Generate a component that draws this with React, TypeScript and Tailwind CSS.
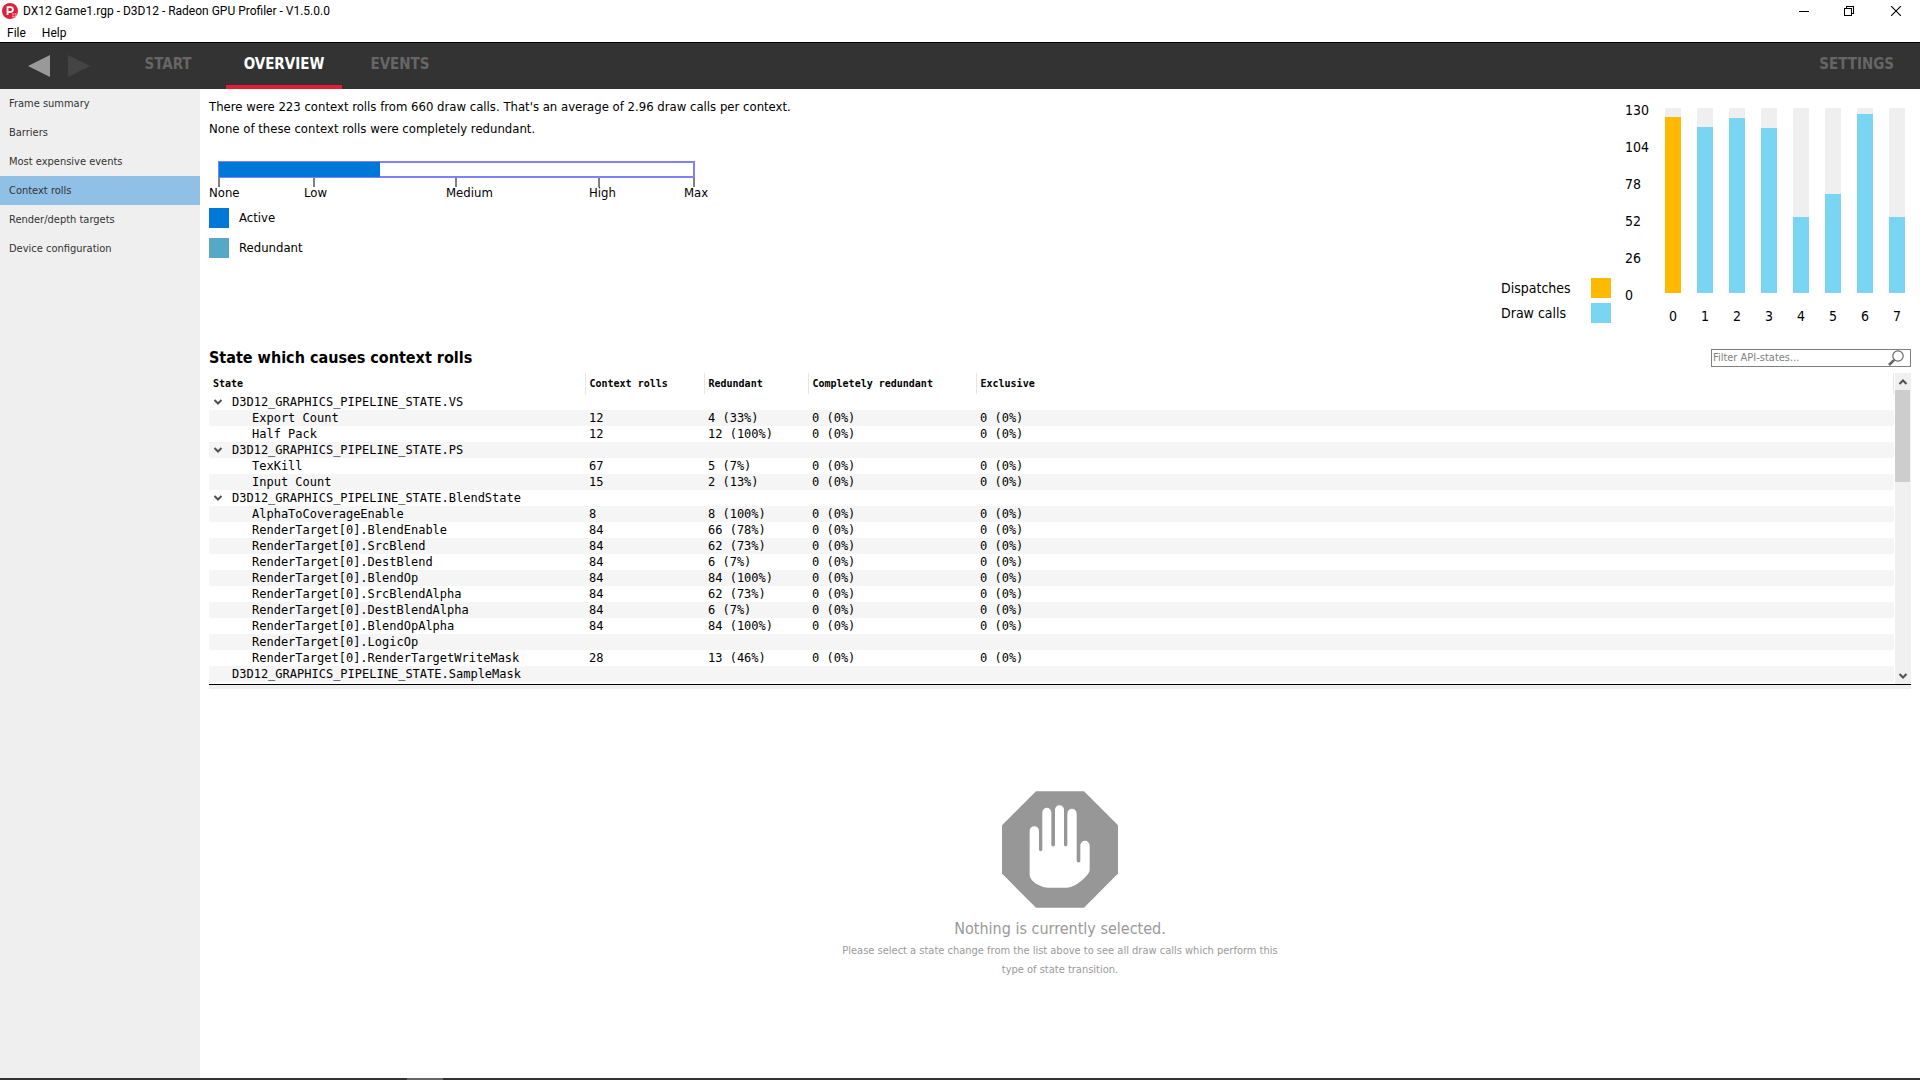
type Row = { name: string; level: 0 | 1; open?: boolean; cells?: [string, string, string, string] };

const zero = "0 (0%)";
const leaf = (name: string, rolls: string, redundant: string): Row => ({
  name,
  level: 1,
  cells: [rolls, redundant, zero, zero],
});

const rows: Row[] = [
  { name: "D3D12_GRAPHICS_PIPELINE_STATE.VS", level: 0, open: true },
  leaf("Export Count", "12", "4 (33%)"),
  leaf("Half Pack", "12", "12 (100%)"),
  { name: "D3D12_GRAPHICS_PIPELINE_STATE.PS", level: 0, open: true },
  leaf("TexKill", "67", "5 (7%)"),
  leaf("Input Count", "15", "2 (13%)"),
  { name: "D3D12_GRAPHICS_PIPELINE_STATE.BlendState", level: 0, open: true },
  leaf("AlphaToCoverageEnable", "8", "8 (100%)"),
  leaf("RenderTarget[0].BlendEnable", "84", "66 (78%)"),
  leaf("RenderTarget[0].SrcBlend", "84", "62 (73%)"),
  leaf("RenderTarget[0].DestBlend", "84", "6 (7%)"),
  leaf("RenderTarget[0].BlendOp", "84", "84 (100%)"),
  leaf("RenderTarget[0].SrcBlendAlpha", "84", "62 (73%)"),
  leaf("RenderTarget[0].DestBlendAlpha", "84", "6 (7%)"),
  leaf("RenderTarget[0].BlendOpAlpha", "84", "84 (100%)"),
  { name: "RenderTarget[0].LogicOp", level: 1 },
  leaf("RenderTarget[0].RenderTargetWriteMask", "28", "13 (46%)"),
  { name: "D3D12_GRAPHICS_PIPELINE_STATE.SampleMask", level: 0 },
];

const columns = ["State", "Context rolls", "Redundant", "Completely redundant", "Exclusive"];
const sections = [
  "Frame summary",
  "Barriers",
  "Most expensive events",
  "Context rolls",
  "Render/depth targets",
  "Device configuration",
];
const bars = [176, 166, 175, 165, 76, 99, 179, 76];
const BAR_RANGE = 185;

function AppLogo() {
  return (
    <svg viewBox="0 0 16 16" className="size-4" aria-hidden="true">
      <circle cx="8" cy="8" r="8" fill="#e0203a" />
      <path d="M5.5 12V4.2h3a2.3 2.3 0 0 1 0 4.8h-3" fill="none" stroke="#fff" strokeWidth="1.8" />
      <path d="M10 11h5M10 13.500h4M11 10v5M13.500 10v5" stroke="#f6a3ad" strokeWidth=".7" />
    </svg>
  );
}

function TitleBar() {
  return (
    <header className="flex h-[22px] items-center pl-[2px] text-black">
      <AppLogo />
      <h1 className="ml-[5px] flex-1 font-['Roboto','Noto_Sans',sans-serif] text-[12px] leading-4">
        DX12 Game1.rgp - D3D12 - Radeon GPU Profiler - V1.5.0.0
      </h1>
      <button aria-label="Minimize" className="flex w-[45px] justify-center">
        <svg viewBox="0 0 10 10" className="size-[10px]" shapeRendering="crispEdges">
          <path d="M0 5.500h10" stroke="#000" />
        </svg>
      </button>
      <button aria-label="Restore" className="flex w-[45px] justify-center">
        <svg viewBox="0 0 10 10" className="size-[10px]" shapeRendering="crispEdges">
          <path d="M.5 2.500h7v7h-7zM2.500 2.500v-2h7v7h-2" fill="none" stroke="#000" />
        </svg>
      </button>
      <button aria-label="Close" className="flex w-[49px] justify-center">
        <svg viewBox="0 0 10 10" className="size-[10px]">
          <path d="M0 0l10 10M10 0L0 10" stroke="#000" strokeWidth="1.100" />
        </svg>
      </button>
    </header>
  );
}

function Toolbar() {
  return (
    <nav className="flex h-[47px] border-t border-black bg-[#333] text-[15px] font-bold leading-5 text-[#666]">
      <button aria-label="Back" className="ml-7 mt-3 self-start">
        <svg viewBox="0 0 22 22" className="size-[22px]">
          <path d="M22 0v22L0 11z" fill="#999" />
        </svg>
      </button>
      <button aria-label="Forward" className="ml-[18px] mt-3 self-start">
        <svg viewBox="0 0 22 22" className="size-[22px]">
          <path d="M0 0v22l22-11z" fill="#444" />
        </svg>
      </button>
      <button className="ml-5 w-[116px] pb-[5px]">START</button>
      <button className="w-[116px] border-b-4 border-[#e01f37] pb-px text-white">OVERVIEW</button>
      <button className="w-[116px] pb-[5px]">EVENTS</button>
      <button className="ml-auto mr-[26px] pb-[5px]">SETTINGS</button>
    </nav>
  );
}

function Sidebar() {
  return (
    <aside className="w-[200px] shrink-0 bg-[#efefef] text-[11px] leading-[30px] text-[#333]">
      {sections.map((s) => (
        <a
          key={s}
          href="#"
          className={s === "Context rolls" ? "block h-[29px] bg-[#90c0e6] pl-[9px]" : "block h-[29px] pl-[9px]"}
        >
          {s}
        </a>
      ))}
    </aside>
  );
}

function RollMeter() {
  const ticks: [string, string][] = [
    ["None", "w-[95px]"],
    ["Low", "w-[142px]"],
    ["Medium", "w-[143px]"],
    ["High", "w-[95px]"],
    ["Max", "w-[40px]"],
  ];
  return (
    <div className="mt-[21px]">
      <div className="ml-[9px] h-[17px] w-[477px] border-2 border-[#8080ff]">
        <div className="-ml-px -mt-px h-[15px] w-[34%] bg-[#0078d7]" />
      </div>
      <div className="flex">
        {ticks.map(([label, width]) => (
          <div key={label} className={width}>
            <div className="ml-[9px] h-[9px] w-[2px] bg-[#808080]" />
            <div className="leading-3">{label}</div>
          </div>
        ))}
      </div>
    </div>
  );
}

function Summary() {
  return (
    <div className="text-[13px] text-black">
      <p className="pt-[7px] leading-[22px]">
        There were 223 context rolls from 660 draw calls. That's an average of 2.96 draw calls per context.
      </p>
      <p className="leading-[22px]">None of these context rolls were completely redundant.</p>
      <RollMeter />
      <ul className="mt-[9px] space-y-[10px] leading-5">
        <li className="flex gap-[10px]">
          <span className="size-5 bg-[#0078d7]" />
          Active
        </li>
        <li className="flex gap-[10px]">
          <span className="size-5 bg-[#55a9c6]" />
          Redundant
        </li>
      </ul>
    </div>
  );
}

function ContextChart() {
  return (
    <div className="flex items-end text-[14px] leading-5 text-black">
      <div className="grid grid-cols-[90px_20px] gap-y-[5px] pb-[3px]">
        <span>Dispatches</span>
        <span className="size-5 bg-[#ffb900]" />
        <span>Draw calls</span>
        <span className="size-5 bg-[#79d5f1]" />
      </div>
      <div className="mb-[21px] ml-[14px] w-10 space-y-[17px]">
        {[130, 104, 78, 52, 26, 0].map((n) => (
          <div key={n}>{n}</div>
        ))}
      </div>
      <div className="flex gap-4">
        {bars.map((h, i) => (
          <div key={i} className="w-4 text-center">
            <div className="flex h-[185px] items-end bg-[#efefef]">
              <div
                className={i === 0 ? "w-full bg-[#ffb900]" : "w-full bg-[#79d5f1]"}
                style={{ height: `${(h / BAR_RANGE) * 100}%` }}
              />
            </div>
            <div className="mt-[13px]">{i}</div>
          </div>
        ))}
      </div>
    </div>
  );
}

function Chevron({ up }: { up?: boolean }) {
  return (
    <svg viewBox="0 0 10 8" className="h-2 w-[10px]" aria-hidden="true">
      <path d={up ? "M1.500 6L5 2.500 8.500 6" : "M1.500 2L5 5.500 8.500 2"} fill="none" stroke="#505050" strokeWidth="2" />
    </svg>
  );
}

function StateTable() {
  return (
    <div className="flex border-b border-black">
      <div className="min-w-0 flex-1 pb-[2px]">
        <table className="w-full table-fixed border-collapse text-left font-['DejaVu_Sans_Mono',monospace] text-[12px] leading-4 text-black">
          <colgroup>
            <col className="w-[376px]" />
            <col className="w-[119px]" />
            <col className="w-[104px]" />
            <col className="w-[168px]" />
            <col />
          </colgroup>
          <thead>
            <tr className="h-[21px] text-[10px]">
              {columns.map((c) => (
                <th key={c} className="border-r border-[#e5e5e5] p-0 pl-1 font-bold">
                  {c}
                </th>
              ))}
            </tr>
          </thead>
          <tbody>
            {rows.map((r) => (
              <tr key={r.name} className="h-4 even:bg-[#f5f5f5]">
                <td className="whitespace-nowrap p-0">
                  <div className={r.level ? "pl-[43px]" : "flex items-center pl-1"}>
                    {r.level === 0 && <span className="w-[19px]">{r.open && <Chevron />}</span>}
                    {r.name}
                  </div>
                </td>
                {[0, 1, 2, 3].map((i) => (
                  <td key={i} className="p-0 pl-1">
                    {r.cells?.[i]}
                  </td>
                ))}
              </tr>
            ))}
          </tbody>
        </table>
      </div>
      <div className="ml-px flex w-4 flex-col bg-[#f0f0f0] pr-px">
        <button aria-label="Scroll up" className="flex h-[17px] items-center justify-center">
          <Chevron up />
        </button>
        <div className="h-[92px] bg-[#cdcdcd]" />
        <button aria-label="Scroll down" className="mt-auto flex h-[17px] items-center justify-center">
          <Chevron />
        </button>
      </div>
    </div>
  );
}

function EmptySelection() {
  return (
    <section className="flex flex-col items-center pt-[102px] text-center text-[#999]">
      <svg viewBox="516 63 348 350" className="h-[117px] w-[116px]" aria-hidden="true">
        <path d="M618 63h144l102 102v145L762 413H618L516 310V165z" fill="#979797" />
        <path
          d="M599 313V182a14 14 0 0 1 28 0v56a5 5 0 0 0 10 0V127a13.500 14 0 0 1 27 0v97a5.500 5 0 0 0 11 0V118a13.500 13 0 0 1 27 0v106a5 5 0 0 0 10 0V130a14 14 0 0 1 28 0v142a5.500 5 0 0 0 11 0V226a14 14 0 0 1 28 0v74C779 312 740 353 705 353H660C630 353 599 333 599 313z"
          fill="#fff"
        />
      </svg>
      <h3 className="mt-[9px] text-[16px] leading-6">Nothing is currently selected.</h3>
      <p className="w-[440px] text-[11px] leading-[19px]">
        Please select a state change from the list above to see all draw calls which perform this type of state
        transition.
      </p>
    </section>
  );
}

export default function App() {
  return (
    <div className="flex min-h-screen flex-col bg-white font-['DejaVu_Sans_Condensed','DejaVu_Sans',sans-serif]">
      <TitleBar />
      <div className="flex h-5 gap-4 pl-[7px] font-['Roboto','Noto_Sans',sans-serif] text-[12px] leading-[22px] text-black">
        <button>File</button>
        <button>Help</button>
      </div>
      <Toolbar />
      <div className="flex flex-1">
        <Sidebar />
        <main className="min-w-0 flex-1 pl-[9px] pr-[9px]">
          <div className="flex items-start justify-between pr-[6px]">
            <Summary />
            <div className="pt-[11px]">
              <ContextChart />
            </div>
          </div>
          <div className="flex h-[47px] items-center justify-between pt-[17px]">
            <h2 className="text-[16px] font-bold leading-6 text-black">State which causes context rolls</h2>
            <label className="flex h-[18px] w-[200px] items-center border border-[#808080] pl-px pr-[6px]">
              <input
                aria-label="Filter API-states"
                placeholder="Filter API-states..."
                className="min-w-0 flex-1 text-[11px] leading-4 outline-none placeholder:text-[#808080]"
              />
              <svg viewBox="0 0 16 16" className="size-4" aria-hidden="true">
                <circle cx="10" cy="6" r="5.200" fill="none" stroke="#666" strokeWidth="1.200" />
                <path d="M6.200 9.800L1 15" stroke="#666" strokeWidth="2.600" />
              </svg>
            </label>
          </div>
          <StateTable />
          <div className="h-[4px] bg-[#efefef]" />
          <EmptySelection />
        </main>
      </div>
      <footer className="flex h-[2px] bg-[#333]">
        <div className="ml-[407px] w-9 bg-[#666]" />
      </footer>
    </div>
  );
}
